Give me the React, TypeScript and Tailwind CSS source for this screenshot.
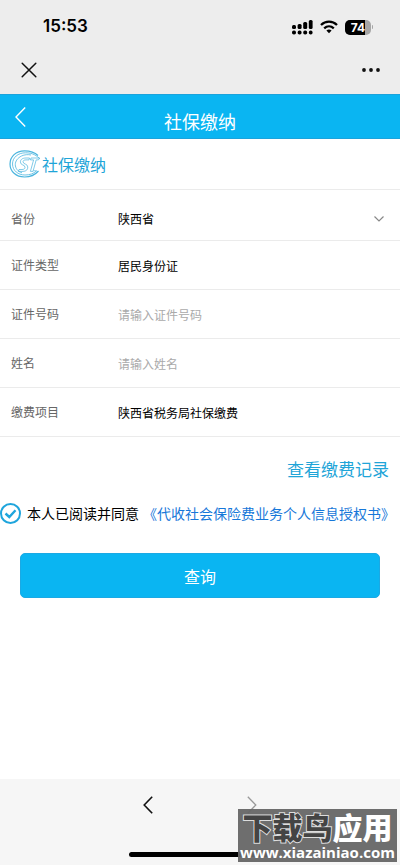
import React, { useState } from 'react';

function SignalIcon() {
  return (
    <svg width="21" height="15" viewBox="0 0 21 15" fill="#000" aria-hidden="true">
      <rect x="0" y="5" width="4" height="4" rx="1.5" />
      <rect x="5.6" y="4" width="4" height="5" rx="1.5" />
      <rect x="11.2" y="2" width="4" height="7" rx="1.5" />
      <rect x="16.8" y="0" width="3.8" height="9" rx="1.5" />
      <rect x="0" y="10.6" width="4" height="4" rx="1.8" />
      <rect x="5.6" y="10.6" width="4" height="4" rx="1.8" />
      <rect x="11.2" y="10.6" width="4" height="4" rx="1.8" />
      <rect x="16.8" y="10.6" width="3.8" height="4" rx="1.8" />
    </svg>
  );
}

function WifiIcon() {
  return (
    <svg width="18" height="14" viewBox="0 0 18 14" fill="none" stroke="#000" strokeWidth="2.3" aria-hidden="true">
      <path d="M1 5 C5.5 0.6 12.5 0.6 17 5" />
      <path d="M4.2 8.3 C7 5.7 11 5.7 13.8 8.3" />
      <path d="M6.4 10.6 C8 9.2 10 9.2 11.6 10.6 L9 13.2 Z" fill="#000" stroke="none" />
    </svg>
  );
}

function Battery() {
  return (
    <div className="flex items-center gap-px" aria-label="74%">
      <div className="relative h-[15px] w-[26px] overflow-hidden rounded-[5px] bg-[#a6a6a6]">
        <div className="h-full w-5 bg-black" />
        <span className="absolute inset-0 text-center font-['Inter'] text-xs leading-[15px] font-bold text-white">74</span>
      </div>
      <div className="h-1 w-px rounded-r bg-[#a6a6a6]" />
    </div>
  );
}

function Logo() {
  return (
    <svg width="32" height="28" viewBox="0 0 32 28" fill="none" stroke="#4bb5de" aria-hidden="true">
      <path d="M29 5.5 C25 1.5 20 0.8 15.5 0.8 C7 0.8 1 6.5 1 14 C1 21.5 7 27 15.5 27 C21 27 26 25 29.5 21" strokeWidth="1.2" />
      <path d="M30.5 8.5 C26 3.8 21 2.8 16.5 2.8 C9 2.8 3.5 7.5 3.5 14 C3.5 20.5 9 25 16 25 C21 25 25 23.5 28 20.5" strokeWidth="0.8" />
      <path d="M22 5 C19 4.3 15.5 4.6 12.5 6 C8.5 8 6.3 11.3 6.3 14.5 C6.3 18.5 9 21.7 13 22.8" strokeWidth="0.8" />
      <path d="M20.5 8 H17 C13 8 11.4 9.8 11.4 12 C11.4 15.5 16 14.5 16 17.2 C16 18.8 15 19.5 13 19.5 H10 L9.4 21.4 H14 C17.2 21.4 18.8 19.6 18.8 17 C18.8 13.7 14 14.3 14 11.8 C14 10.6 15 9.9 17 9.9 H20 Z" strokeWidth="0.7" />
      <path d="M22 8 H30.8 L29.4 9.9 H27.2 L24 21.4 H21.4 L24.6 9.9 H21.4 Z" strokeWidth="0.7" />
      <path d="M27 20.8 H24.5" strokeWidth="0.7" />
    </svg>
  );
}

type FieldProps = {
  id: string;
  label: string;
  children: React.ReactNode;
};

function Field({ id, label, children }: FieldProps) {
  return (
    <div className="flex h-[49px] items-center border-b border-[#ebebeb] pr-4 pl-[11px]">
      <label htmlFor={id} className="w-[107px] shrink-0 text-xs text-[#666]">
        {label}
      </label>
      {children}
    </div>
  );
}

const inputClass = 'h-6 min-w-0 flex-1 bg-transparent text-xs text-black outline-none placeholder:text-[#aaa]';

export default function App() {
  const [agreed, setAgreed] = useState(true);
  const [idNumber, setIdNumber] = useState('');
  const [name, setName] = useState('');

  return (
    <div className="relative flex min-h-screen flex-col bg-white font-['Noto_Sans_CJK_SC',sans-serif]">
      <header className="bg-[#ededed]">
        <div className="flex h-[54px] items-center justify-between pr-[27px] pl-[43px]">
          <span className="font-['Inter',sans-serif] text-[17px] font-semibold text-black">15:53</span>
          <div className="flex items-center gap-[7px]">
            <SignalIcon />
            <WifiIcon />
            <Battery />
          </div>
        </div>
        <div className="flex h-10 items-start justify-between px-5">
          <button type="button" aria-label="关闭" className="flex h-8 w-[18px] items-center justify-center">
            <svg width="16" height="16" viewBox="0 0 16 16" stroke="#111" strokeWidth="1.5" strokeLinecap="round">
              <path d="M1.2 1.2 L14.8 14.8 M14.8 1.2 L1.2 14.8" />
            </svg>
          </button>
          <button type="button" aria-label="更多" className="flex h-8 items-center">
            <svg width="18" height="4" viewBox="0 0 18 4" fill="#111">
              <circle cx="2" cy="2" r="1.9" />
              <circle cx="9" cy="2" r="1.9" />
              <circle cx="16" cy="2" r="1.9" />
            </svg>
          </button>
        </div>
      </header>

      <div className="grid h-[45px] grid-cols-[40px_1fr_40px] border-y border-[#1ba3dc] bg-[#0ab5f2] text-white">
        <button type="button" aria-label="返回" className="flex items-center justify-center">
          <svg width="11" height="20" viewBox="0 0 11 20" fill="none" stroke="#fff" strokeWidth="1.4">
            <path d="M10.2 0.6 L1 10 L10.2 19.4" />
          </svg>
        </button>
        <h1 className="pt-[14px] text-center text-lg leading-6">社保缴纳</h1>
      </div>

      <main className="flex-1">
        <div className="flex h-[51px] items-center gap-px border-b border-[#ebebeb] pl-[9px]">
          <Logo />
          <h2 className="text-base leading-6 text-[#1fa5d8]">社保缴纳</h2>
        </div>

        <form onSubmit={(e) => e.preventDefault()}>
          <div>
            <div className="flex h-[51px] items-center border-b border-[#ebebeb] pt-2 pr-4 pl-[11px]">
              <label htmlFor="province" className="w-[107px] shrink-0 text-xs text-[#666]">
                省份
              </label>
              <div className="grid flex-1 items-center">
                <select id="province" className="col-start-1 row-start-1 h-6 w-full appearance-none bg-transparent text-xs text-black outline-none">
                  <option>陕西省</option>
                </select>
                <svg className="pointer-events-none col-start-1 row-start-1 justify-self-end" width="10" height="6" viewBox="0 0 10 6" fill="none" stroke="#888" strokeWidth="1.2">
                  <path d="M0.5 0.5 L5 5 L9.5 0.5" />
                </svg>
              </div>
            </div>
            <Field id="id-type" label="证件类型">
              <input id="id-type" className={inputClass} value="居民身份证" readOnly />
            </Field>
            <Field id="id-number" label="证件号码">
              <input id="id-number" className={inputClass} placeholder="请输入证件号码" value={idNumber} onChange={(e) => setIdNumber(e.target.value)} />
            </Field>
            <Field id="name" label="姓名">
              <input id="name" className={inputClass} placeholder="请输入姓名" value={name} onChange={(e) => setName(e.target.value)} />
            </Field>
            <Field id="item" label="缴费项目">
              <input id="item" className={inputClass} value="陕西省税务局社保缴费" readOnly />
            </Field>
          </div>

          <div className="flex justify-end pt-5 pr-[11px]">
            <a href="#records" className="text-[17px] leading-6 text-[#1fa5d8]">查看缴费记录</a>
          </div>

          <div className="flex items-center pt-5 text-sm leading-6 whitespace-nowrap">
            <span className="mr-[6px] grid size-[21px] shrink-0">
              <input
                id="agree"
                type="checkbox"
                checked={agreed}
                onChange={(e) => setAgreed(e.target.checked)}
                className="col-start-1 row-start-1 size-[21px] appearance-none rounded-full border-2 border-[#1fa5dc]"
              />
              {agreed && (
                <svg className="pointer-events-none col-start-1 row-start-1" width="21" height="21" viewBox="0 0 21 21" fill="none" stroke="#1fa5dc" strokeWidth="2.4">
                  <path d="M5.5 10.5 L9.3 14 L15.5 7.3" />
                </svg>
              )}
            </span>
            <label htmlFor="agree" className="mr-1 text-black">本人已阅读并同意</label>
            <a href="#agreement" className="text-[#1677d9]">《代收社会保险费业务个人信息授权书》</a>
          </div>

          <div className="px-5 pt-7">
            <button type="submit" className="h-[45px] w-full rounded-[5px] border border-[#1ba9e4] bg-[#0ab5f2] text-base text-white">
              查询
            </button>
          </div>
        </form>
      </main>

      <footer className="flex h-[86px] flex-col items-center justify-between bg-[#f6f6f6] pt-[17px] pb-2">
        <nav className="flex gap-[94px]">
          <button type="button" aria-label="后退">
            <svg width="10" height="18" viewBox="0 0 10 18" fill="none" stroke="#111" strokeWidth="1.6">
              <path d="M9.2 0.8 L1.2 9 L9.2 17.2" />
            </svg>
          </button>
          <button type="button" aria-label="前进">
            <svg width="10" height="18" viewBox="0 0 10 18" fill="none" stroke="#999" strokeWidth="1.3">
              <path d="M0.8 0.8 L8.8 9 L0.8 17.2" />
            </svg>
          </button>
        </nav>
        <div className="h-[5px] w-[142px] rounded-full bg-black" />
      </footer>

      {/* site watermark */}
      <div className="absolute right-[3px] bottom-[3px] flex h-[53px] w-[159px] flex-col items-center bg-[#666]/95 text-white">
        <div className="text-[30px] leading-[34px] font-black whitespace-nowrap">
          <span className="text-[#444] [paint-order:stroke] [-webkit-text-stroke:2px_#ddd]">下载鸟</span>
          <span>应用</span>
        </div>
        <div className="font-['Open_Sans',sans-serif] text-[15px] leading-[18px] font-bold">www.xiazainiao.com</div>
      </div>
    </div>
  );
}
